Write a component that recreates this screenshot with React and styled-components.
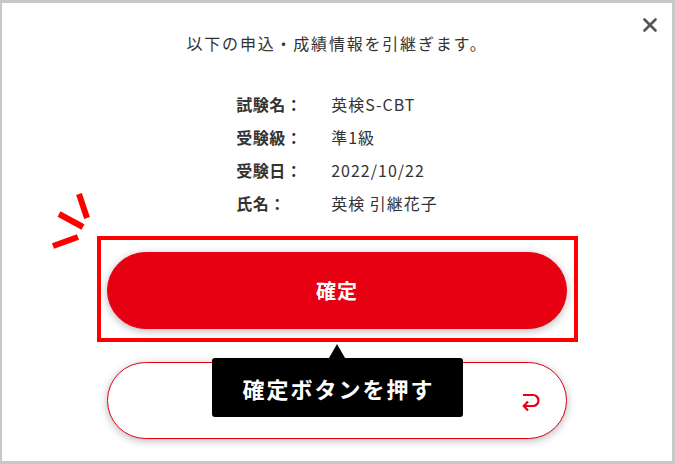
import React from 'react';
import styled, { createGlobalStyle } from 'styled-components';

const GlobalStyle = createGlobalStyle`
  html, body {
    margin: 0;
    padding: 0;
    background: #c8c8c8;
  }
  body {
    font-family: "Noto Sans CJK JP", "Noto Sans", sans-serif;
    color: #333;
  }
`;

const Frame = styled.div`
  width: 675px;
  height: 464px;
  box-sizing: border-box;
  padding: 3px 3px 3px 2px;
  background: #c8c8c8;
`;

const Panel = styled.div`
  position: relative;
  width: 670px;
  height: 458px;
  box-sizing: border-box;
  padding-top: 28px;
  background: #fff;
  display: flex;
  flex-direction: column;
  align-items: center;
`;

const CloseButton = styled.button`
  position: absolute;
  top: 14px;
  right: 14px;
  width: 16px;
  height: 16px;
  padding: 0;
  border: none;
  background: none;
  display: flex;
  align-items: center;
  justify-content: center;
`;

const Lead = styled.p`
  margin: 0;
  font-size: 16px;
  line-height: 24px;
  letter-spacing: 1.8px;
  color: #333;
`;

const InfoList = styled.dl`
  margin: 33px 0 0;
  display: grid;
  grid-template-columns: 95px auto;
  font-size: 16px;
  line-height: 33px;
`;

const Label = styled.dt`
  font-weight: 700;
  letter-spacing: 0.5px;
  color: #333;
`;

const Value = styled.dd`
  margin: 0;
  letter-spacing: 1px;
  color: #333;
`;

const Highlight = styled.div`
  margin-top: 16px;
  width: 481px;
  height: 106px;
  box-sizing: border-box;
  border: 4px solid #ff0000;
  display: flex;
  align-items: center;
  justify-content: center;
  padding-top: 3px;
`;

const Pill = styled.button`
  width: 460px;
  height: 77px;
  border-radius: 39px;
  box-sizing: border-box;
  font-family: inherit;
  display: flex;
  align-items: center;
  justify-content: center;
  position: relative;
  box-shadow: 0 2px 8px rgba(0, 0, 0, 0.28);
  border: 1px solid #e60012;
  background: ${p => (p.$primary ? '#e60012' : '#fff')};
  color: ${p => (p.$primary ? '#fff' : '#e60012')};
  font-size: 20px;
  font-weight: 700;
  letter-spacing: 1px;
`;

const BackPill = styled(Pill)`
  margin-top: 20px;
  justify-content: flex-end;
  padding-right: 24px;
`;

const Tooltip = styled.div`
  position: absolute;
  left: 210px;
  top: 355px;
  width: 251px;
  height: 59px;
  border-radius: 3px;
  background: #000;
  color: #fff;
  font-size: 22px;
  font-weight: 700;
  letter-spacing: 2px;
  display: flex;
  align-items: center;
  justify-content: center;
  padding-left: 2px;
  box-sizing: border-box;

  &::before {
    content: '';
    position: absolute;
    left: 117px;
    top: -14px;
    border-left: 8.5px solid transparent;
    border-right: 8.5px solid transparent;
    border-bottom: 14px solid #000;
  }
`;

const Sparks = styled.svg`
  position: absolute;
  left: 43px;
  top: 182px;
`;

function App() {
  const rows = [
    ['試験名：', '英検S-CBT'],
    ['受験級：', '準1級'],
    ['受験日：', '2022/10/22'],
    ['氏名：', '英検 引継花子'],
  ];

  return (
    <>
      <GlobalStyle />
      <Frame>
        <Panel>
          <CloseButton aria-label="close">
            <svg width="14" height="14" viewBox="0 0 14 14">
              <path d="M1.5 1.5 L12.5 12.5 M12.5 1.5 L1.5 12.5" stroke="#555" strokeWidth="2.6" strokeLinecap="round" />
            </svg>
          </CloseButton>

          <Lead>以下の申込・成績情報を引継ぎます。</Lead>

          <InfoList>
            {rows.map(([k, v]) => (
              <React.Fragment key={k}>
                <Label>{k}</Label>
                <Value>{v}</Value>
              </React.Fragment>
            ))}
          </InfoList>

          <Highlight>
            <Pill $primary>確定</Pill>
          </Highlight>

          <BackPill>
            <svg width="22" height="22" viewBox="0 0 22 22" fill="none">
              <path d="M3 5 H13 A5.5 5.5 0 0 1 13 16 H4" stroke="#e60012" strokeWidth="2.2" />
              <path d="M8 11.5 L3.8 16 L8 20.5" stroke="#e60012" strokeWidth="2.2" />
            </svg>
          </BackPill>

          <Tooltip>確定ボタンを押す</Tooltip>

          <Sparks width="70" height="70" viewBox="0 0 70 70">
            <path d="M34 9 L42 33" stroke="#ff0000" strokeWidth="6" />
            <path d="M14 29 L38 42" stroke="#ff0000" strokeWidth="6" />
            <path d="M8 61 L33 52" stroke="#ff0000" strokeWidth="6" />
          </Sparks>
        </Panel>
      </Frame>
    </>
  );
}

export default App;
